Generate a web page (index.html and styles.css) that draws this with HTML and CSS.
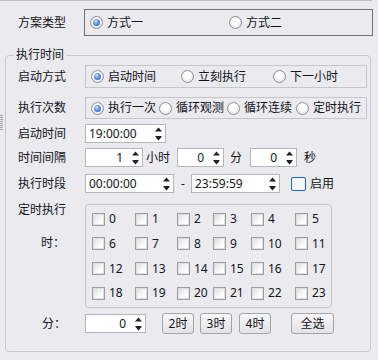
FILE: index.html
```html
<!DOCTYPE html>
<html lang="zh">
<head>
<meta charset="utf-8">
<title>执行时间</title>
<link rel="stylesheet" href="styles.css">
</head>
<body>
<div class="topline"></div>
<div class="scheme">
  <div class="slabel">方案类型</div>
  <div class="sbox">
    <div class="ritem w139"><span class="radio on"></span>方式一</div>
    <div class="ritem"><span class="radio"></span>方式二</div>
  </div>
</div>
<fieldset class="group">
  <legend>执行时间</legend>
  <div class="gbody">
    <div class="row">
      <div class="lbl">启动方式</div>
      <div class="rbox h23">
        <div class="ritem w90"><span class="radio on"></span>启动时间</div>
        <div class="ritem w92"><span class="radio"></span>立刻执行</div>
        <div class="ritem"><span class="radio"></span>下一小时</div>
      </div>
    </div>
    <div class="row mt9">
      <div class="lbl">执行次数</div>
      <div class="rbox h22">
        <div class="ritem w68"><span class="radio on"></span>执行一次</div>
        <div class="ritem w68"><span class="radio"></span>循环观测</div>
        <div class="ritem w69"><span class="radio"></span>循环连续</div>
        <div class="ritem"><span class="radio"></span>定时执行</div>
      </div>
    </div>
    <div class="row mt5">
      <div class="lbl">启动时间</div>
      <div class="spin w81"><span class="v">19:00:00</span><svg class="arr" viewBox="0 0 7 14"><polygon points="0,4.5 3.5,0.5 7,4.5"/><rect x="0.5" y="9" width="6" height="1"/><polygon points="0.5,10 6.5,10 3.5,13.5"/></svg></div>
    </div>
    <div class="row mt5">
      <div class="lbl">时间间隔</div>
      <div class="spin num w58"><span class="v">1</span><svg class="arr" viewBox="0 0 7 14"><polygon points="0,4.5 3.5,0.5 7,4.5"/><rect x="0.5" y="9" width="6" height="1"/><polygon points="0.5,10 6.5,10 3.5,13.5"/></svg></div>
      <span class="ml3">小时</span>
      <div class="spin num w47 ml7"><span class="v">0</span><svg class="arr" viewBox="0 0 7 14"><polygon points="0,4.5 3.5,0.5 7,4.5"/><rect x="0.5" y="9" width="6" height="1"/><polygon points="0.5,10 6.5,10 3.5,13.5"/></svg></div>
      <span class="ml6">分</span>
      <div class="spin num w47 ml8"><span class="v">0</span><svg class="arr" viewBox="0 0 7 14"><polygon points="0,4.5 3.5,0.5 7,4.5"/><rect x="0.5" y="9" width="6" height="1"/><polygon points="0.5,10 6.5,10 3.5,13.5"/></svg></div>
      <span class="ml7">秒</span>
    </div>
    <div class="row mt7">
      <div class="lbl">执行时段</div>
      <div class="spin w89"><span class="v">00:00:00</span><svg class="arr" viewBox="0 0 7 14"><polygon points="0,4.5 3.5,0.5 7,4.5"/><rect x="0.5" y="9" width="6" height="1"/><polygon points="0.5,10 6.5,10 3.5,13.5"/></svg></div>
      <span class="dash">-</span>
      <div class="spin w89 ml6"><span class="v">23:59:59</span><svg class="arr" viewBox="0 0 7 14"><polygon points="0,4.5 3.5,0.5 7,4.5"/><rect x="0.5" y="9" width="6" height="1"/><polygon points="0.5,10 6.5,10 3.5,13.5"/></svg></div>
      <span class="enable"></span>
      <span class="ml4">启用</span>
    </div>
    <div class="sched mt11">
      <div class="schlbl">
        <span class="t1">定时执行</span>
        <span class="t2">时：</span>
      </div>
      <div class="hours">
        <div class="citem"><span class="cb"></span>0</div>
        <div class="citem"><span class="cb"></span>1</div>
        <div class="citem"><span class="cb"></span>2</div>
        <div class="citem"><span class="cb"></span>3</div>
        <div class="citem"><span class="cb"></span>4</div>
        <div class="citem"><span class="cb"></span>5</div>
        <div class="citem"><span class="cb"></span>6</div>
        <div class="citem"><span class="cb"></span>7</div>
        <div class="citem"><span class="cb"></span>8</div>
        <div class="citem"><span class="cb"></span>9</div>
        <div class="citem"><span class="cb"></span>10</div>
        <div class="citem"><span class="cb"></span>11</div>
        <div class="citem"><span class="cb"></span>12</div>
        <div class="citem"><span class="cb"></span>13</div>
        <div class="citem"><span class="cb"></span>14</div>
        <div class="citem"><span class="cb"></span>15</div>
        <div class="citem"><span class="cb"></span>16</div>
        <div class="citem"><span class="cb"></span>17</div>
        <div class="citem"><span class="cb"></span>18</div>
        <div class="citem"><span class="cb"></span>19</div>
        <div class="citem"><span class="cb"></span>20</div>
        <div class="citem"><span class="cb"></span>21</div>
        <div class="citem"><span class="cb"></span>22</div>
        <div class="citem"><span class="cb"></span>23</div>
      </div>
    </div>
    <div class="row mt5">
      <div class="lbl"><span class="minlbl">分：</span></div>
      <div class="spin num w61 h21"><span class="v">0</span><svg class="arr" viewBox="0 0 7 14"><polygon points="0,4.5 3.5,0.5 7,4.5"/><rect x="0.5" y="9" width="6" height="1"/><polygon points="0.5,10 6.5,10 3.5,13.5"/></svg></div>
      <div class="btn w32 ml16">2时</div>
      <div class="btn w32 ml6">3时</div>
      <div class="btn w32 ml7">4时</div>
      <div class="btn w43 ml20">全选</div>
    </div>
  </div>
</fieldset>
</body>
</html>
```
FILE: styles.css
```css
* { box-sizing: border-box; }
html, body { margin: 0; padding: 0; }
body {
  width: 378px;
  height: 360px;
  overflow: hidden;
  font-family: "Noto Sans", "Noto Sans CJK SC", sans-serif;
  font-size: 12px;
  line-height: 16px;
  color: #15151c;
  background:
    repeating-linear-gradient(to bottom, #a2a3a8 0 1px, transparent 1px 2px) 0 115px / 3px 16px no-repeat,
    #eaeaef;
}
.topline { width: 372px; height: 1px; background: #bfc0c5; }

.scheme { display: flex; align-items: center; margin-top: 8px; }
.slabel { width: 84px; padding-left: 18px; flex: none; }
.sbox {
  display: flex; align-items: center;
  width: 289px; height: 27px;
  border: 1px solid #6f7074;
  padding-left: 5px;
}

.ritem { display: flex; align-items: center; gap: 4px; white-space: nowrap; flex: none; }
.w139 { width: 139px; }
.w90 { width: 90px; }
.w92 { width: 92px; }
.w68 { width: 68px; }
.w69 { width: 69px; }

.radio {
  width: 13px; height: 13px; flex: none;
  border-radius: 50%;
  border: 1px solid #8e8f93;
  background: radial-gradient(circle at 50% 40%, #ffffff 35%, #d6d7db 100%);
  display: flex; align-items: center; justify-content: center;
}
.radio.on::after {
  content: "";
  width: 7px; height: 7px; border-radius: 50%;
  background: radial-gradient(circle at 40% 35%, #d4e3fb 0, #5f91e2 45%, #2a57b2 100%);
}

.group {
  margin: 11px 0 0 5px;
  width: 366px;
  padding: 0;
  border: 1px solid #c8c9ce;
  border-radius: 4px;
  min-width: 0;
}
.group legend { margin-left: 8px; padding: 0 2px; line-height: 16px; }
.gbody { padding: 2px 0 17px 12px; }

.row { display: flex; align-items: center; white-space: nowrap; }
.lbl { width: 67px; flex: none; }
.rbox {
  display: flex; align-items: center;
  width: 282px;
  border: 1px solid #c6c7cc;
  padding-left: 5px;
}
.h23 { height: 23px; }
.h22 { height: 22px; }
.mt5 { margin-top: 5px; }
.mt7 { margin-top: 7px; }
.mt9 { margin-top: 9px; }
.mt11 { margin-top: 11px; }
.ml3 { margin-left: 3px; }
.ml4 { margin-left: 4px; }
.ml6 { margin-left: 6px; }
.ml7 { margin-left: 7px; }
.ml8 { margin-left: 8px; }
.ml16 { margin-left: 16px; }
.ml20 { margin-left: 20px; }

.spin {
  display: flex; align-items: center; flex: none;
  height: 19px;
  border: 1px solid #b5b6ba;
  background: #fff;
  padding: 0 3px 0 3px;
}
.spin .v { flex: 1; }
.spin.num .v { text-align: right; padding-right: 9px; }
.h21 { height: 19px; }
.w81 { width: 81px; }
.w58 { width: 58px; }
.w47 { width: 47px; }
.w89 { width: 89px; }
.w61 { width: 61px; }
.arr { width: 7px; height: 14px; flex: none; fill: #202024; }

.dash { margin-left: 7px; width: 4px; }
.enable {
  margin-left: 11px;
  width: 15px; height: 14px; flex: none;
  border: 1.5px solid #2063c8;
  border-radius: 2px;
  background: #f6f7fa;
}

.sched { display: flex; }
.schlbl { width: 67px; flex: none; display: flex; flex-direction: column; }
.schlbl .t1 { margin-top: -2px; }
.schlbl .t2 { margin-top: 17px; padding-left: 23px; }
.hours {
  width: 247px; height: 104px;
  border: 1px solid #c6c7cc;
  border-radius: 4px;
  padding: 2px 0 0 6px;
  display: grid;
  grid-template-columns: 43px 42px 36px 38px 44px auto;
  grid-auto-rows: 24.67px;
  align-items: center;
}
.citem { display: flex; align-items: center; gap: 4px; }
.cb {
  width: 13px; height: 13px; flex: none;
  border: 1px solid #9c9da1;
  box-shadow: inset 0 0 0 1px #e0e0e3;
  background: linear-gradient(135deg, #dcdce0, #ffffff 70%);
}

.minlbl { padding-left: 24px; }
.btn {
  display: flex; align-items: center; justify-content: center; flex: none;
  height: 21px;
  border: 1px solid #a3a4a9;
  border-radius: 3px;
  background: linear-gradient(#f7f7f9, #e2e3e7);
}
.w32 { width: 32px; }
.w43 { width: 43px; }
```
